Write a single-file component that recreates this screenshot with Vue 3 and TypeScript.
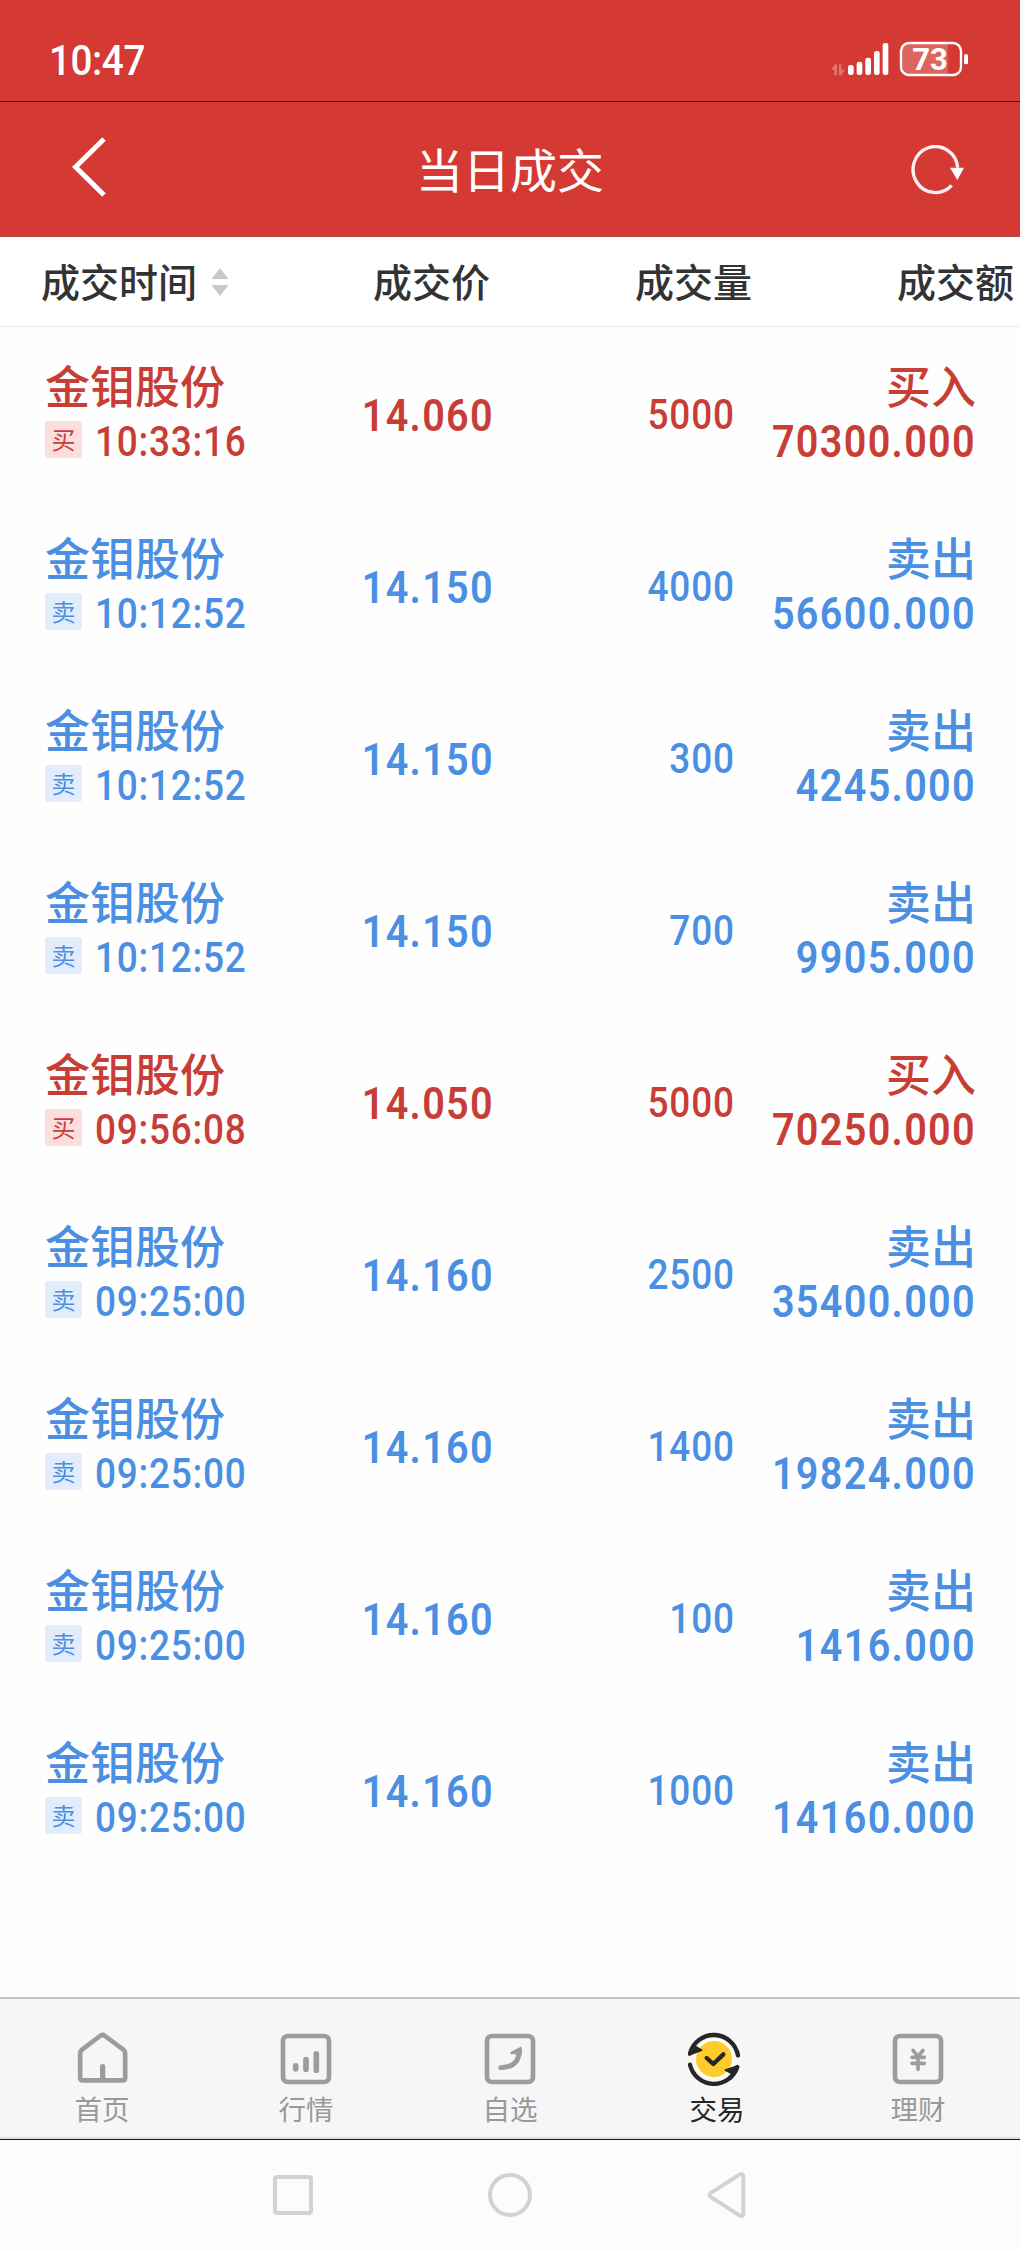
<script setup lang="ts">
interface Trade {
  side: 'buy' | 'sell'
  time: string
  price: string
  volume: string
  amount: string
}

const stock = '金钼股份'

const trades: Trade[] = [
  { side: 'buy', time: '10:33:16', price: '14.060', volume: '5000', amount: '70300.000' },
  { side: 'sell', time: '10:12:52', price: '14.150', volume: '4000', amount: '56600.000' },
  { side: 'sell', time: '10:12:52', price: '14.150', volume: '300', amount: '4245.000' },
  { side: 'sell', time: '10:12:52', price: '14.150', volume: '700', amount: '9905.000' },
  { side: 'buy', time: '09:56:08', price: '14.050', volume: '5000', amount: '70250.000' },
  { side: 'sell', time: '09:25:00', price: '14.160', volume: '2500', amount: '35400.000' },
  { side: 'sell', time: '09:25:00', price: '14.160', volume: '1400', amount: '19824.000' },
  { side: 'sell', time: '09:25:00', price: '14.160', volume: '100', amount: '1416.000' },
  { side: 'sell', time: '09:25:00', price: '14.160', volume: '1000', amount: '14160.000' },
]
</script>

<template>
  <div class="screen">
    <div class="status">
      <span class="clock">10:47</span>
      <svg class="indicators" width="138" height="36" viewBox="0 0 414 108">
        <g fill="#fff" opacity="0.3">
          <path d="M0 86 L12 70 H18 V103 H10 V86Z M24 70 H31 V86 H42 L31 103 H24Z" />
        </g>
        <g fill="#fff">
          <rect x="51" y="72" width="17" height="30" rx="7" />
          <rect x="77" y="62" width="17" height="40" rx="7" />
          <rect x="103" y="50" width="17" height="52" rx="7" />
          <rect x="129" y="30" width="17" height="72" rx="7" />
          <rect x="155" y="6" width="17" height="96" rx="7" />
          <rect x="399" y="39" width="12" height="31" rx="5" />
        </g>
        <path d="M350 9 H232 Q213 9 213 28 V80 Q213 99 232 99 H350Z" fill="#fff" opacity="0.22" />
        <rect x="210" y="6" width="180" height="96" rx="24" fill="none" stroke="#fff" stroke-width="7" />
        <text x="297" y="87" class="level">73</text>
      </svg>
    </div>

    <header class="titlebar">
      <svg class="back" width="36" height="64" viewBox="0 0 36 64">
        <path d="M32 4 L3.500 32 L32 60" fill="none" stroke="#fff" stroke-width="5" />
      </svg>
      <h1>当日成交</h1>
      <svg class="refresh" width="56" height="50" viewBox="0 0 168 150">
        <path d="M143 68 A67 69 0 1 0 125 121" fill="none" stroke="#fff" stroke-opacity="0.93" stroke-width="10" />
        <path d="M120 68 H162 L142 105Z" fill="#fff" />
      </svg>
    </header>

    <div class="columns">
      <div class="col first">
        <span>成交时间</span>
        <svg width="18" height="28" viewBox="0 0 18 28">
          <path d="M9 0 L17.5 11 H0.5Z M0.5 17 H17.5 L9 28Z" fill="#c9c9c9" />
        </svg>
      </div>
      <div class="col"><span>成交价</span></div>
      <div class="col"><span>成交量</span></div>
      <div class="col"><span>成交额</span></div>
    </div>

    <main class="list">
      <div v-for="(t, i) in trades" :key="i" class="row" :class="t.side">
        <div class="who">
          <div class="name">{{ stock }}</div>
          <div class="when">
            <span class="tag">{{ t.side === 'buy' ? '买' : '卖' }}</span>
            <span class="time">{{ t.time }}</span>
          </div>
        </div>
        <div class="price">{{ t.price }}</div>
        <div class="volume">{{ t.volume }}</div>
        <div class="total">
          <div class="name">{{ t.side === 'buy' ? '买入' : '卖出' }}</div>
          <div class="amount">{{ t.amount }}</div>
        </div>
      </div>
    </main>

    <nav class="tabs">
      <div class="tab">
        <svg viewBox="0 0 168 168" fill="none" stroke="#9c9c9c" stroke-width="14">
          <path d="M18.500 68 Q18.500 60 25 55 L78 15 Q85.500 9 93 15 L147 55 Q153.500 60 153.500 68 V140 Q153.500 148 145.500 148 H26.500 Q18.500 148 18.500 140Z" />
          <path d="M86 107 V146" stroke-width="16" stroke-linecap="round" />
        </svg>
        <span>首页</span>
      </div>
      <div class="tab">
        <svg viewBox="0 0 168 168" fill="none" stroke="#9c9c9c" stroke-width="14">
          <rect x="15" y="15" width="138" height="138" rx="14" />
          <path d="M53 104.500 V113.500 M84 85.500 V114.500 M115 68.500 V117.500" stroke-width="17" stroke-linecap="round" />
        </svg>
        <span>行情</span>
      </div>
      <div class="tab">
        <svg viewBox="0 0 168 168" fill="none" stroke="#9c9c9c" stroke-width="14">
          <rect x="15" y="15" width="138" height="138" rx="14" />
          <path d="M56 110 C90 109 110 96 112 60" stroke-width="15" stroke-linecap="round" />
          <path d="M88 66 L116 51 L116 66Z" fill="#9c9c9c" stroke-width="7" stroke-linejoin="round" />
        </svg>
        <span>自选</span>
      </div>
      <div class="tab active">
        <svg viewBox="0 0 168 168" fill="none" stroke="#262626" stroke-width="13">
          <circle cx="84" cy="84" r="62" fill="#fffdf4" stroke="none" />
          <circle cx="84" cy="84" r="54" fill="#ffcc2c" stroke="none" />
          <path d="M12 67 A74 75 0 0 1 156 73" stroke-linecap="round" />
          <path d="M12 101 A74 75 0 0 0 154 108" stroke-linecap="round" />
          <path d="M9 72 L47 58 L26 45Z M154 105 L118 117 L144 131Z" fill="#262626" stroke-width="5" stroke-linejoin="round" />
          <path d="M62 81 L82 99 L112 70" stroke-linecap="round" stroke-linejoin="round" />
        </svg>
        <span>交易</span>
      </div>
      <div class="tab">
        <svg viewBox="0 0 168 168" fill="none" stroke="#9c9c9c" stroke-width="14">
          <rect x="15" y="15" width="138" height="138" rx="14" />
          <path d="M69 58 L84 76 L99 58 M84 76 V115 M66 79 H103 M66 97 H103" stroke-width="11" stroke-linecap="round" />
        </svg>
        <span>理财</span>
      </div>
    </nav>

    <div class="system">
      <div class="recent"></div>
      <div class="home"></div>
      <svg width="40" height="46" viewBox="0 0 120 138">
        <path d="M11 63 Q4 69 11 75 L97 130 Q109 136 109 124 V14 Q109 2 97 8Z" fill="none" stroke="#d2d2d2" stroke-width="12" />
      </svg>
    </div>
  </div>
</template>

<style>
body {
  margin: 0;
}
</style>

<style scoped>
.screen {
  width: 1020px;
  height: 2250px;
  box-sizing: border-box;
  display: flex;
  flex-direction: column;
  overflow: hidden;
  background: #fefefe;
  font-family: 'Noto Sans CJK SC', sans-serif;
}
.status {
  height: 101px;
  flex: none;
  box-sizing: border-box;
  display: flex;
  align-items: flex-start;
  justify-content: space-between;
  padding: 41px 51px 0 49px;
  background: #d43a33;
}
.clock {
  font: 500 42px/40px Roboto, sans-serif;
  letter-spacing: -0.45px;
  color: #fff;
  transform: scaleX(0.92);
  transform-origin: left;
}
.level {
  font: 700 93px Roboto, sans-serif;
  fill: #fff;
  text-anchor: middle;
}
.titlebar {
  height: 136px;
  flex: none;
  box-sizing: border-box;
  display: flex;
  align-items: center;
  justify-content: space-between;
  padding: 0 54px 0 72px;
  background: #d43a33;
  border-top: 1px solid #3d1015;
  border-bottom: 1px solid #b04a45;
}
.back {
  margin-top: -4px;
}
.refresh {
  margin-top: 1px;
}
.titlebar h1 {
  margin: -3px 0 0 2px;
  font-size: 47px;
  line-height: 60px;
  font-weight: 400;
  color: #fff;
}
.columns {
  height: 90px;
  flex: none;
  box-sizing: border-box;
  display: grid;
  grid-template-columns: 190px 259px 262px 262px;
  padding: 0 5px 0 41px;
  align-items: center;
  border-bottom: 1px solid #eaeaea;
  background: #fff;
  font-size: 39px;
  line-height: 50px;
  font-weight: 500;
  color: #333;
}
.col {
  display: flex;
  align-items: center;
  justify-content: flex-end;
  white-space: nowrap;
}
.col span {
  padding-bottom: 4px;
}
.col.first {
  justify-content: flex-start;
  gap: 14px;
}
.list {
  flex: 1;
}
.row {
  height: 172px;
  box-sizing: border-box;
  display: grid;
  grid-template-columns: 217px 232px 241px 241px;
  padding: 31px 44px 0 45px;
}
.buy {
  color: #c83e36;
}
.sell {
  color: #4a8fe2;
}
.name {
  font-size: 45px;
  line-height: 54px;
  font-weight: 500;
}
.when {
  height: 54px;
  display: flex;
  align-items: center;
  gap: 12.5px;
}
.tag {
  flex: none;
  width: 37px;
  height: 37px;
  border-radius: 3px;
  font-size: 24px;
  line-height: 35px;
  text-align: center;
  font-weight: 400;
}
.buy .tag {
  background: #fbdfdf;
}
.sell .tag {
  background: #e1edfc;
}
/* Figures are set narrow with open tracking, DIN style */
.time {
  padding-top: 6px;
  font: 500 42px/50px Roboto, sans-serif;
  letter-spacing: 0.85px;
  transform: scaleX(0.88);
  transform-origin: left;
}
.price,
.volume,
.total {
  text-align: right;
}
.price,
.volume,
.amount {
  transform: scaleX(0.88);
  transform-origin: right;
}
.price {
  padding-top: 33px;
  font: 600 45px/50px Roboto, sans-serif;
  letter-spacing: 1.5px;
}
.volume {
  padding-top: 32px;
  font: 500 42px/50px Roboto, sans-serif;
  letter-spacing: 1px;
}
.amount {
  padding-top: 5px;
  font: 600 45px/50px Roboto, sans-serif;
  letter-spacing: 1.5px;
}
.tabs {
  height: 142px;
  flex: none;
  box-sizing: border-box;
  display: flex;
  background: #f6f6f6;
  border-top: 2px solid #c6c6c6;
  border-bottom: 2px solid #dedede;
}
.tab {
  flex: 1;
  display: flex;
  flex-direction: column;
  align-items: center;
  padding-top: 32px;
  font-size: 27.5px;
  line-height: 36px;
  color: #999;
}
.tab svg {
  width: 56px;
  height: 56px;
}
.tab span {
  margin-top: 3px;
}
.tab.active span {
  padding-left: 6px;
  color: #262626;
}
.system {
  height: 111px;
  flex: none;
  box-sizing: border-box;
  display: flex;
  align-items: center;
  padding-left: 273px;
  border-top: 1px solid #1a1618;
  background: #fcfcfc;
}
.recent {
  width: 40px;
  height: 40px;
  box-sizing: border-box;
  border: 4px solid #d2d2d2;
  border-radius: 4px;
}
.home {
  width: 44px;
  height: 44px;
  box-sizing: border-box;
  margin: 0 175px;
  border: 4px solid #d2d2d2;
  border-radius: 50%;
}
</style>
